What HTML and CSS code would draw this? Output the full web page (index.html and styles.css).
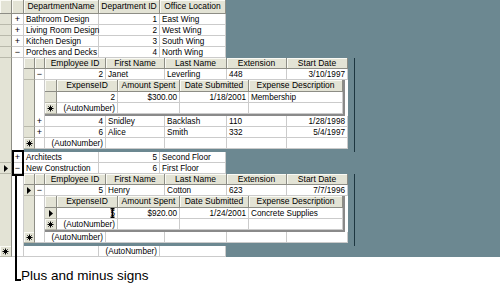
FILE: index.html
```html
<!DOCTYPE html>
<html>
<head>
<meta charset="utf-8">
<link rel="stylesheet" href="styles.css">
</head>
<body>
<div class="page">
  <div class="screen">
    <div class="sheet">
      <div class="row head head-main">
        <div class="c m-sel"></div><div class="c m-xp"></div>
        <div class="c m-name">DepartmentName</div><div class="c m-id">Department ID</div><div class="c m-loc">Office Location</div>
      </div>
      <div class="row">
        <div class="c sel m-sel"></div><div class="c xp m-xp">+</div>
        <div class="c m-name">Bathroom Design</div><div class="c num m-id">1</div><div class="c m-loc">East Wing</div>
      </div>
      <div class="row">
        <div class="c sel m-sel"></div><div class="c xp m-xp">+</div>
        <div class="c m-name">Living Room Design</div><div class="c num m-id">2</div><div class="c m-loc">West Wing</div>
      </div>
      <div class="row">
        <div class="c sel m-sel"></div><div class="c xp m-xp">+</div>
        <div class="c m-name">Kitchen Design</div><div class="c num m-id">3</div><div class="c m-loc">South Wing</div>
      </div>
      <div class="row">
        <div class="c sel m-sel"></div><div class="c xp m-xp">−</div>
        <div class="c m-name">Porches and Decks</div><div class="c num m-id">4</div><div class="c m-loc">North Wing</div>
      </div>

      <div class="nest">
        <div class="gut-sel m-sel"></div><div class="gut-xp m-xp"></div>
        <div class="sub-emp">
          <div class="row head">
            <div class="c e-sel"></div><div class="c e-xp"></div>
            <div class="c e-id">Employee ID</div><div class="c e-fn">First Name</div><div class="c e-ln">Last Name</div><div class="c e-ext">Extension</div><div class="c e-sd">Start Date</div>
          </div>
          <div class="row">
            <div class="c sel e-sel"></div><div class="c xp e-xp">−</div>
            <div class="c num e-id">2</div><div class="c e-fn">Janet</div><div class="c e-ln">Leverling</div><div class="c e-ext">448</div><div class="c num e-sd">3/10/1997</div>
          </div>
          <div class="nest">
            <div class="gut-sel e-sel"></div><div class="gut-xp e-xp"></div>
            <div class="sub-exp">
              <div class="row head head-exp">
                <div class="c x-sel"></div><div class="c x-id">ExpenseID</div><div class="c x-amt">Amount Spent</div><div class="c x-date">Date Submitted</div><div class="c x-desc">Expense Description</div>
              </div>
              <div class="row">
                <div class="c sel x-sel"></div><div class="c num x-id">2</div><div class="c num x-amt">$300.00</div><div class="c num x-date">1/18/2001</div><div class="c x-desc">Membership</div>
              </div>
              <div class="row">
                <div class="c sel newrec x-sel"><svg class="star" width="7" height="7" viewBox="0 0 7 7"><path d="M3.5 0.5V6.5M0.5 3.5H6.5M1.4 1.4L5.6 5.6M5.6 1.4L1.4 5.6" stroke="#000" stroke-width="1"/></svg></div><div class="c num x-id">(AutoNumber)</div><div class="c x-amt"></div><div class="c x-date"></div><div class="c x-desc"></div>
              </div>
            </div>
            <div class="fill"></div>
          </div>
          <div class="row">
            <div class="c sel e-sel"></div><div class="c xp e-xp">+</div>
            <div class="c num e-id">4</div><div class="c e-fn">Snidley</div><div class="c e-ln">Backlash</div><div class="c e-ext">110</div><div class="c num e-sd">1/28/1998</div>
          </div>
          <div class="row">
            <div class="c sel e-sel"></div><div class="c xp e-xp">+</div>
            <div class="c num e-id">6</div><div class="c e-fn">Alice</div><div class="c e-ln">Smith</div><div class="c e-ext">332</div><div class="c num e-sd">5/4/1997</div>
          </div>
          <div class="row">
            <div class="c sel newrec e-sel"><svg class="star" width="7" height="7" viewBox="0 0 7 7"><path d="M3.5 0.5V6.5M0.5 3.5H6.5M1.4 1.4L5.6 5.6M5.6 1.4L1.4 5.6" stroke="#000" stroke-width="1"/></svg></div><div class="c xp e-xp"></div>
            <div class="c num e-id">(AutoNumber)</div><div class="c e-fn"></div><div class="c e-ln"></div><div class="c e-ext"></div><div class="c e-sd"></div>
          </div>
        </div>
      </div>

      <div class="row">
        <div class="c sel m-sel"></div><div class="c xp m-xp">+</div>
        <div class="c m-name">Architects</div><div class="c num m-id">5</div><div class="c m-loc">Second Floor</div>
      </div>
      <div class="row">
        <div class="c sel m-sel"><svg width="4" height="7" viewBox="0 0 4 7"><path d="M0 0L4 3.5L0 7Z"/></svg></div><div class="c xp m-xp">−</div>
        <div class="c m-name">New Construction</div><div class="c num m-id">6</div><div class="c m-loc">First Floor</div>
      </div>

      <div class="nest">
        <div class="gut-sel m-sel"></div><div class="gut-xp m-xp"></div>
        <div class="sub-emp">
          <div class="row head">
            <div class="c e-sel"></div><div class="c e-xp"></div>
            <div class="c e-id">Employee ID</div><div class="c e-fn">First Name</div><div class="c e-ln">Last Name</div><div class="c e-ext">Extension</div><div class="c e-sd">Start Date</div>
          </div>
          <div class="row">
            <div class="c sel e-sel"><svg width="4" height="7" viewBox="0 0 4 7"><path d="M0 0L4 3.5L0 7Z"/></svg></div><div class="c xp e-xp">−</div>
            <div class="c num e-id">5</div><div class="c e-fn">Henry</div><div class="c e-ln">Cotton</div><div class="c e-ext">623</div><div class="c num e-sd">7/7/1996</div>
          </div>
          <div class="nest">
            <div class="gut-sel e-sel"></div><div class="gut-xp e-xp"></div>
            <div class="sub-exp">
              <div class="row head head-exp">
                <div class="c x-sel"></div><div class="c x-id">ExpenseID</div><div class="c x-amt">Amount Spent</div><div class="c x-date">Date Submitted</div><div class="c x-desc">Expense Description</div>
              </div>
              <div class="row">
                <div class="c sel x-sel"><svg width="4" height="7" viewBox="0 0 4 7"><path d="M0 0L4 3.5L0 7Z"/></svg></div><div class="c num x-id cur">5<svg class="ibeam" width="5" height="10" viewBox="0 0 5 10"><path d="M0.5 0.7H4.5M2.5 0.7V9.3M0.5 9.3H4.5" stroke="#000" stroke-width="1.5"/></svg></div><div class="c num x-amt">$920.00</div><div class="c num x-date">1/24/2001</div><div class="c x-desc">Concrete Supplies</div>
              </div>
              <div class="row">
                <div class="c sel newrec x-sel"><svg class="star" width="7" height="7" viewBox="0 0 7 7"><path d="M3.5 0.5V6.5M0.5 3.5H6.5M1.4 1.4L5.6 5.6M5.6 1.4L1.4 5.6" stroke="#000" stroke-width="1"/></svg></div><div class="c num x-id">(AutoNumber)</div><div class="c x-amt"></div><div class="c x-date"></div><div class="c x-desc"></div>
              </div>
            </div>
            <div class="fill"></div>
          </div>
          <div class="row">
            <div class="c sel newrec e-sel"><svg class="star" width="7" height="7" viewBox="0 0 7 7"><path d="M3.5 0.5V6.5M0.5 3.5H6.5M1.4 1.4L5.6 5.6M5.6 1.4L1.4 5.6" stroke="#000" stroke-width="1"/></svg></div><div class="c xp e-xp"></div>
            <div class="c num e-id">(AutoNumber)</div><div class="c e-fn"></div><div class="c e-ln"></div><div class="c e-ext"></div><div class="c e-sd"></div>
          </div>
        </div>
      </div>

      <div class="row">
        <div class="c sel newrec m-sel"><svg class="star" width="7" height="7" viewBox="0 0 7 7"><path d="M3.5 0.5V6.5M0.5 3.5H6.5M1.4 1.4L5.6 5.6M5.6 1.4L1.4 5.6" stroke="#000" stroke-width="1"/></svg></div><div class="c xp m-xp"></div>
        <div class="c m-name"></div><div class="c num m-id">(AutoNumber)</div><div class="c m-loc"></div>
      </div>
    </div>
  </div>
  <div class="caption">Plus and minus signs</div>
  <div class="callout">
    <div class="box"></div>
    <div class="leader"></div>
  </div>
</div>
</body>
</html>
```

FILE: styles.css
```css
* { box-sizing: border-box; }

body {
  margin: 0;
  background: #fff;
  font-family: "Liberation Sans", Arial, sans-serif;
  font-size: 8.2px;
  color: #000;
}

.page {
  position: relative;
  width: 500px;
  height: 287px;
  overflow: hidden;
}

.screen {
  width: 500px;
  height: 257px;
  background: #6c8891;
  overflow: hidden;
}

.sheet {
  display: flex;
  flex-direction: column;
  align-items: flex-start;
}

.row {
  display: flex;
  height: 11px;
  background: #fff;
  flex: none;
}

.c {
  height: 100%;
  flex: none;
  border-right: 1px solid #cbcbcb;
  border-bottom: 1px solid #cbcbcb;
  padding: 0 2px;
  line-height: 11px;
  white-space: nowrap;
}

.num { text-align: right; }

.head .c {
  background: #e3e3d5;
  border-right-color: #8d8d85;
  border-bottom-color: #8d8d85;
  box-shadow: inset 1px 1px 0 #fafaf4;
  text-align: center;
  line-height: 10px;
  padding: 0;
  font-size: 8.5px;
}

.head-main { height: 14px; }
.head-main .c { line-height: 13px; }
.head-exp { height: 12px; }
.head-exp .c { line-height: 11px; }

.sel {
  background: #e3e3d5;
  border-right-color: #8d8d85;
  border-bottom-color: #b9b9ab;
  padding: 0;
  display: flex;
  align-items: center;
  justify-content: center;
}

.newrec { box-shadow: inset 1px 1px 0 #fafaf4; }

.xp {
  text-align: center;
  padding: 0;
  font-size: 9px;
}

.cur { position: relative; }
.ibeam {
  position: absolute;
  right: 2px;
  top: 0;
}

.nest {
  display: flex;
  flex: none;
}

.gut-sel {
  flex: none;
  background: #e3e3d5;
  border-right: 1px solid #8d8d85;
}

.gut-xp {
  flex: none;
  background: #fff;
  border-right: 1px solid #cbcbcb;
}

.sub-emp {
  display: flex;
  flex-direction: column;
  padding: 0 6px 3px 0;
  border-right: 1px solid #1d3640;
}

.sub-exp {
  display: flex;
  flex-direction: column;
  border-right: 2px solid #8a8a8a;
  border-bottom: 2px solid #8a8a8a;
}

.fill {
  width: 3px;
  background: #fff;
}

/* main datasheet columns */
.m-sel { width: 12px; }
.m-xp { width: 12px; }
.m-name { width: 75px; }
.m-id { width: 61px; }
.m-loc { width: 66px; }

/* employee subdatasheet columns */
.e-sel { width: 11px; }
.e-xp { width: 10px; }
.e-id { width: 61px; }
.e-fn { width: 59px; }
.e-ln { width: 62px; }
.e-ext { width: 60px; }
.e-sd { width: 61px; }

/* expense subdatasheet columns */
.x-sel { width: 12px; }
.x-id { width: 61px; }
.x-amt { width: 62px; }
.x-date { width: 69px; }
.x-desc { width: 94px; }

.caption {
  margin-top: 11px;
  padding-left: 21px;
  font-size: 13.5px;
  line-height: 16px;
}

.callout {
  position: absolute;
  left: 12px;
  top: 150px;
}

.box {
  width: 12px;
  height: 26px;
  border: 2px solid #000;
}

.leader {
  position: absolute;
  left: 3px;
  top: 25px;
  width: 6px;
  height: 106px;
  border-left: 2px solid #000;
  border-bottom: 2px solid #000;
}
```
